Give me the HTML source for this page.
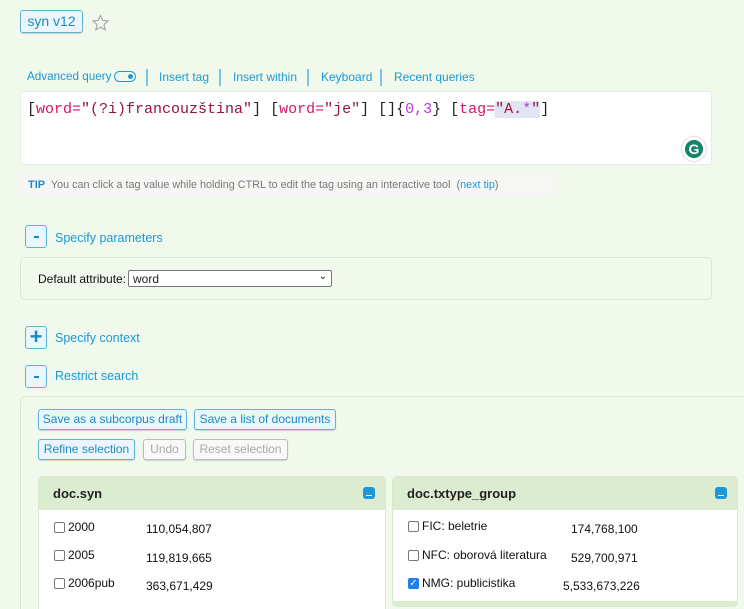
<!DOCTYPE html>
<html><head><meta charset="utf-8"><style>
*{box-sizing:border-box;margin:0;padding:0}
html,body{width:744px;height:609px;overflow:hidden}
body{background:#f1f8ec;font-family:"Liberation Sans",sans-serif;position:relative;color:#222}
.a{position:absolute;white-space:nowrap}
.lk{color:#1a9ad6;font-size:12px}
.sep{position:absolute;width:2px;height:17px;background:#7fc3e3}
.btn{position:absolute;border:1px solid #5eb3d8;border-radius:3px;background:#eaf6fb;color:#1a8ac6;font-size:12px;text-align:center;box-shadow:0 1px 1px rgba(0,0,0,.15)}
.btn.d{border-color:#bbb;color:#aaa;background:#f8f8f8}
.ic{position:absolute;width:22px;height:23px;border:1px solid #5eb3d8;border-radius:3px;background:#eaf6fb;color:#1a8ac6;font-weight:bold;text-align:center;font-size:18px;line-height:20px}
.ic.m:after{content:"";position:absolute;left:8px;top:10px;width:5px;height:2px;background:#1a8ac6}
.card{position:absolute;background:#fff;border-radius:5px;overflow:hidden;border:1px solid #d7e8cc}
.card .h{height:33px;background:#dcecd0;padding:9px 0 0 14px;font-weight:bold;font-size:13px}
.mi{position:absolute;top:10px;width:12px;height:12px;border-radius:3px;background:#1e96d8}
.mi:after{content:"";position:absolute;left:3px;right:3px;bottom:3px;height:1px;background:#fff}
.cb{position:absolute;width:11px;height:11px;border:1px solid #777;border-radius:2px;background:#fff}
.r{font-size:12px;color:#111}
.mono{font-family:"Liberation Mono",monospace;font-size:15px}
</style></head><body>
<div class="btn" style="left:20px;top:10px;width:63px;height:23px;font-size:14px;line-height:21px;color:#1a8ac6">syn v12</div>
<svg class="a" style="left:91px;top:14px" width="19" height="18" viewBox="0 0 24 24"><path d="M12 2l3 6.5 7 .8-5.2 4.8 1.4 7L12 17.6 5.8 21.1l1.4-7L2 9.3l7-.8z" fill="none" stroke="#aaa" stroke-width="1.6"/></svg>

<div class="a lk" style="left:27px;top:70px;font-size:11.7px">Advanced query</div>
<div class="a" style="left:114px;top:71px;width:22px;height:11px;border:1.5px solid #1a9ad6;border-radius:6px"><div style="position:absolute;right:2px;top:2px;width:5px;height:5px;border-radius:50%;background:#1a9ad6"></div></div>
<div class="sep" style="left:146px;top:69px"></div>
<div class="a lk" style="left:159px;top:70px">Insert tag</div>
<div class="sep" style="left:219px;top:69px"></div>
<div class="a lk" style="left:233px;top:70px">Insert within</div>
<div class="sep" style="left:307px;top:69px"></div>
<div class="a lk" style="left:321px;top:70px">Keyboard</div>
<div class="sep" style="left:380px;top:69px"></div>
<div class="a lk" style="left:394px;top:70px">Recent queries</div>

<div class="a" style="left:20px;top:91px;width:692px;height:74px;background:#fff;border:1px solid #e4ecdf;border-radius:3px"></div>
<div class="a mono" style="left:27px;top:101px"><span>[</span><span style="color:#d4166b">word=</span><span style="color:#9b1140">"(?i)francouzština"</span>] [<span style="color:#d4166b">word=</span><span style="color:#9b1140">"je"</span>] []{<span style="color:#b33bd9">0,3</span>} [<span style="color:#d4166b">tag=</span><span style="background:#e2e4f4"><span style="color:#9b1140">"A.</span><span style="color:#b33bd9">*</span><span style="color:#9b1140">"</span></span>]</div>
<div class="a" style="left:682px;top:137px;width:24px;height:24px;border-radius:50%;background:#fff;box-shadow:0 0 2px #aaa"><div style="position:absolute;left:3px;top:3px;width:18px;height:18px;border-radius:50%;background:#13836a;color:#fff;font-weight:bold;font-size:14px;text-align:center;line-height:18px">G</div></div>

<div class="a" style="left:20px;top:173px;width:535px;height:24px;background:#f6f7f4;border-radius:3px;font-size:10.8px;color:#777;padding:6px 0 0 8px"><b style="color:#1a8ac6;font-size:11px">TIP</b>&nbsp; You can click a tag value while holding CTRL to edit the tag using an interactive tool &nbsp;(<span style="color:#1a9ad6">next tip</span>)</div>

<div class="ic m" style="left:25px;top:225px"></div>
<div class="a lk" style="left:55px;top:231px;font-size:12.5px">Specify parameters</div>
<div class="a" style="left:20px;top:257px;width:692px;height:43px;border:1px solid #d9e9cd;border-radius:5px;background:#f1f8ec"></div>
<div class="a" style="left:38px;top:272px;font-size:12px;color:#111">Default attribute:</div>
<div class="a" style="left:128px;top:270px;width:204px;height:17px;border:1px solid #777;border-radius:2px;background:#fff;font-size:12px;padding:1px 0 0 4px">word<span style="position:absolute;right:4px;top:0px;font-size:10px">⌄</span></div>

<div class="ic" style="left:25px;top:326px;font-size:22px">+</div>
<div class="a lk" style="left:55px;top:331px;font-size:12.5px">Specify context</div>
<div class="ic m" style="left:25px;top:365px"></div>
<div class="a lk" style="left:55px;top:369px;font-size:12.5px">Restrict search</div>

<div class="a" style="left:20px;top:396px;width:740px;height:230px;border:1px solid #d9e9cd;border-radius:5px;background:#f1f8ec"></div>
<div class="btn" style="left:38px;top:409px;width:149px;height:21px;line-height:19px">Save as a subcorpus draft</div>
<div class="btn" style="left:194px;top:409px;width:142px;height:21px;line-height:19px">Save a list of documents</div>
<div class="btn" style="left:38px;top:439px;width:97px;height:21px;line-height:19px">Refine selection</div>
<div class="btn d" style="left:143px;top:439px;width:43px;height:21px;line-height:19px">Undo</div>
<div class="btn d" style="left:193px;top:439px;width:95px;height:21px;line-height:19px">Reset selection</div>

<div class="card" style="left:38px;top:476px;width:348px;height:150px"><div class="h">doc.syn</div><div class="mi" style="left:324px"></div>
<div class="cb" style="left:15px;top:45px"></div><div class="a r" style="left:29px;top:43px">2000</div><div class="a r" style="left:107px;top:45px">110,054,807</div>
<div class="cb" style="left:15px;top:73px"></div><div class="a r" style="left:29px;top:71px">2005</div><div class="a r" style="left:107px;top:74px">119,819,665</div>
<div class="cb" style="left:15px;top:101px"></div><div class="a r" style="left:29px;top:99px">2006pub</div><div class="a r" style="left:107px;top:102px">363,671,429</div>
</div>

<div class="card" style="left:392px;top:476px;width:346px;height:131px;border-bottom:6px solid #dcecd0"><div class="h">doc.txtype_group</div><div class="mi" style="left:322px"></div>
<div class="cb" style="left:15px;top:44px"></div><div class="a r" style="left:29px;top:42px">FIC: beletrie</div><div class="a r" style="left:178px;top:45px">174,768,100</div>
<div class="cb" style="left:15px;top:73px"></div><div class="a r" style="left:29px;top:71px">NFC: oborová literatura</div><div class="a r" style="left:178px;top:74px">529,700,971</div>
<div class="cb" style="left:15px;top:101px;background:#1e7ff0;border-color:#1e7ff0;color:#fff;font-size:10px;line-height:9px;text-align:center">✓</div><div class="a r" style="left:29px;top:99px">NMG: publicistika</div><div class="a r" style="left:170px;top:102px">5,533,673,226</div>
</div>
</body></html>
